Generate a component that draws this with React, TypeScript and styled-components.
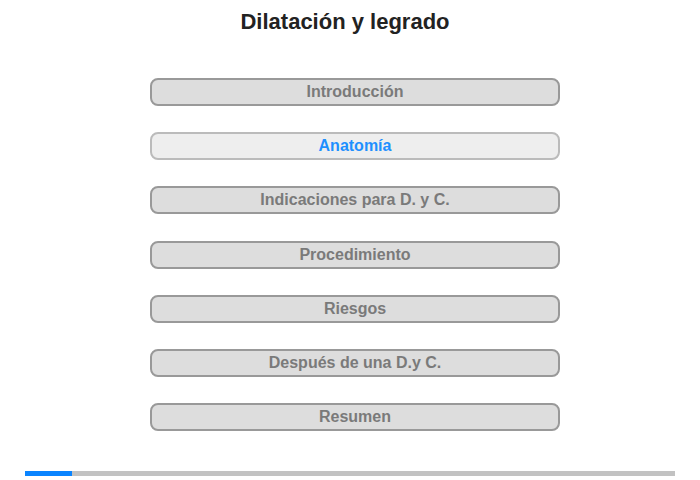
import React from 'react';
import styled, { createGlobalStyle } from 'styled-components';

const GlobalStyle = createGlobalStyle`
  html, body {
    margin: 0;
    padding: 0;
    background: #fff;
    font-family: "Liberation Sans", Arial, sans-serif;
  }
`;

const Page = styled.div`
  width: 700px;
  height: 480px;
  display: flex;
  flex-direction: column;
  box-sizing: border-box;
  padding-top: 9px;
`;

const Title = styled.h1`
  margin: 0;
  width: 690px;
  text-align: center;
  font-size: 22px;
  line-height: 26px;
  font-weight: bold;
  color: #222;
`;

const Menu = styled.nav`
  display: flex;
  flex-direction: column;
  gap: 26.2px;
  margin: 43px 0 0 150px;
  width: 410px;
`;

const MenuButton = styled.div<{ $active?: boolean }>`
  box-sizing: border-box;
  height: 28px;
  border-radius: 8px;
  border: 2px solid ${(p) => (p.$active ? '#bbb' : '#999')};
  background: ${(p) => (p.$active ? '#eee' : '#ddd')};
  color: ${(p) => (p.$active ? '#1e90ff' : '#7a7a7a')};
  display: flex;
  align-items: center;
  justify-content: center;
  font-size: 16px;
  font-weight: bold;
  cursor: pointer;
`;

const Progress = styled.div`
  margin: 40px 0 0 25px;
  width: 650px;
  height: 5px;
  background: #c2c2c2;
  display: flex;
`;

const ProgressFill = styled.div`
  height: 100%;
  background: #0a84ff;
`;

const items = [
  'Introducción',
  'Anatomía',
  'Indicaciones para D. y C.',
  'Procedimiento',
  'Riesgos',
  'Después de una D.y C.',
  'Resumen',
];

const App: React.FC = () => {
  const active = 1;
  return (
    <>
      <GlobalStyle />
      <Page>
        <Title>Dilatación y legrado</Title>
        <Menu>
          {items.map((label, i) => (
            <MenuButton key={label} $active={i === active}>
              {label}
            </MenuButton>
          ))}
        </Menu>
        <Progress>
          <ProgressFill style={{ width: `${(47 / 650) * 100}%` }} />
        </Progress>
      </Page>
    </>
  );
};

export default App;
